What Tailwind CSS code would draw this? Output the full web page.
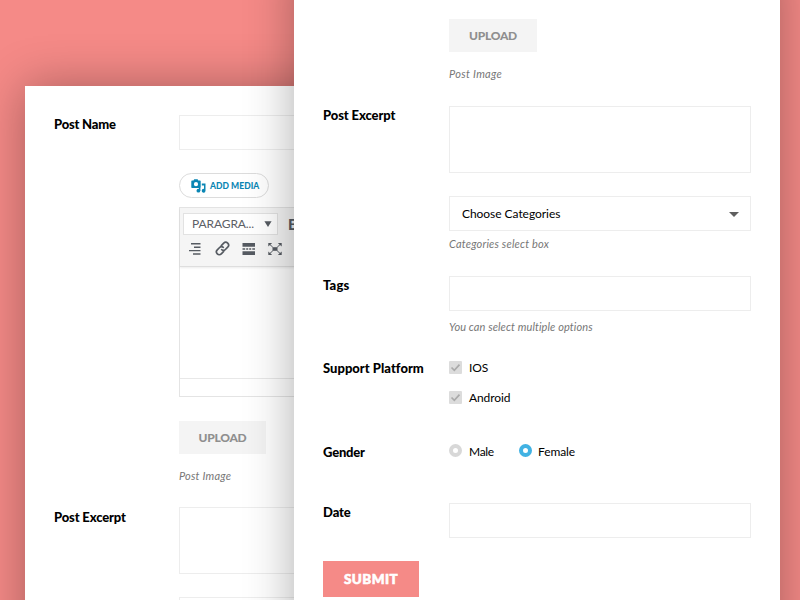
<!DOCTYPE html>
<html lang="en">
<head>
<meta charset="utf-8">
<title>Post form</title>
<script src="https://cdn.jsdelivr.net/npm/@tailwindcss/browser@4"></script>
</head>
<body class="bg-[#f58a87]">
<main class="relative w-[800px] h-[600px] overflow-clip bg-[#f58a87] font-[Lato,sans-serif] text-[12px] leading-[20px] text-black">

<!-- Back window -->
<section class="absolute left-[25px] top-[86px] w-[486px] h-[570px] bg-white pl-[29px] pr-[29px] pt-[29px] shadow-[0_0_46px_rgba(0,0,0,0.32)]">
  <div class="flex">
    <h2 class="w-[125px] shrink-0 -mt-px text-[13px] font-black tracking-[-0.2px]">Post Name</h2>
    <div class="w-[303px]">
      <div class="h-[35px] border border-[#ededed]"></div>
      <button class="mt-[23px] flex h-[25px] w-[90px] items-center rounded-full border border-[#dcdcdc] pl-[11px] text-[8.5px] font-black tracking-[0.05px] text-[#0a86b4]">
        <svg class="mr-[4px] shrink-0" width="15" height="14" viewBox="0 0 15 14" fill="#0a86b4"><path fill-rule="evenodd" d="M1 1.500h1.500L3.200.3h3.400l.7 1.200H9q.7 0 .7.7v6q0 .7-.7.7H1q-.7 0-.7-.7v-6q0-.7.7-.7zM5 3.100a2.100 2.100 0 1 0 0 4.200 2.100 2.100 0 0 0 0-4.200z"/><path d="M10.800 4.500h3.700v7.300a1.900 1.900 0 1 1-1.500-1.900V6.500h-2.200z"/><circle cx="7.400" cy="11.700" r="1.900"/><path d="M7.900 9h1.500v2.800H7.900z"/></svg>
        <span class="whitespace-nowrap">ADD MEDIA</span>
      </button>
      <div class="mt-[9px] h-[190px] border border-[#e4e4e4]">
        <div class="h-[59px] border-b border-[#dedede] bg-[#f5f5f5] pl-[3px] pt-[5px] shadow-[0_1px_2px_rgba(0,0,0,0.08)]">
          <div class="flex items-center">
            <div class="flex h-[22px] w-[95px] items-center justify-between border border-[#e2e2e2] bg-white pl-[8px] pr-[5px] text-[#5c6066]">
              <span class="tracking-[-0.1px]">PARAGRA...</span>
              <svg width="8" height="6" viewBox="0 0 8 6" fill="#565b62"><path d="M.4.3h7.200L4 6z"/></svg>
            </div>
            <b class="ml-[10px] text-[15px] font-black text-[#565b62]">B</b>
          </div>
          <div class="mt-[6px] flex items-center gap-[12px] pl-[6px]">
            <svg width="14" height="14" viewBox="0 0 14 14" stroke="#565b62" stroke-width="1.400"><path d="M2 1.800h9.500M5 5.200h6.500M0 8.600h11.500M4 12h7.500"/></svg>
            <svg width="15" height="15" viewBox="0 0 15 15" fill="none" stroke="#565b62" stroke-width="1.700" stroke-linecap="round"><path d="M6.300 4.600 8.700 2.200a2.800 2.800 0 0 1 4 4L10.400 8.500a2.800 2.800 0 0 1-3.700.2M8.700 10.400 6.300 12.800a2.800 2.800 0 0 1-4-4L4.600 6.500a2.800 2.800 0 0 1 3.700-.2"/></svg>
            <svg width="14" height="14" viewBox="0 0 14 14" fill="#565b62"><path d="M.5 1h12.500v3.800H.5zM.5 9.200h12.500V13H.5zM.5 6.300h2.700v1.400H.5zM4.200 6.300h2v1.400h-2zM7.200 6.300h2v1.400h-2zM10.300 6.300H13v1.400h-2.700z"/></svg>
            <svg width="14" height="14" viewBox="0 0 14 14" fill="#565b62"><path d="M4.500 5.200h5v3.600h-5z"/><path d="M.3 1h3.900L.3 4.400zM13.700 1H9.800l3.900 3.400zM.3 13h3.900L.3 9.600zM13.700 13H9.800l3.900-3.400z"/><path d="m1.300 2 3.500 3.200M12.700 2 9.200 5.200M1.300 12l3.500-3.200M12.700 12 9.200 8.800" stroke="#565b62"/></svg>
          </div>
        </div>
        <div class="h-[112px] border-b border-[#e8e8e8]"></div>
      </div>
      <div class="mt-[24px] flex h-[33px] w-[87px] items-center justify-center bg-[#f4f4f4] text-[12px] font-black tracking-[-0.25px] text-[#8f8f8f]">UPLOAD</div>
      <p class="mt-[12px] text-[11px] italic tracking-[0.2px] text-[#777]">Post Image</p>
    </div>
  </div>
  <div class="mt-[21px] flex">
    <h2 class="w-[125px] shrink-0 text-[13px] font-black tracking-[-0.15px]">Post Excerpt</h2>
    <div class="w-[303px]">
      <div class="h-[67px] border border-[#ededed]"></div>
      <div class="mt-[23px] h-[36px] border border-[#ededed]"></div>
    </div>
  </div>
</section>

<!-- Front window -->
<section class="absolute left-[294px] top-[-40px] w-[486px] h-[700px] bg-white pl-[29px] pr-[29px] pt-[59px] shadow-[0_0_46px_rgba(0,0,0,0.32)]">
  <div class="pl-[126px]">
    <div class="flex h-[33px] w-[88px] items-center justify-center bg-[#f4f4f4] text-[12px] font-black tracking-[-0.25px] text-[#8f8f8f]">UPLOAD</div>
    <p class="mt-[12px] text-[11px] italic tracking-[0.3px] text-[#777]">Post Image</p>
  </div>
  <div class="mt-[22px] flex">
    <h2 class="w-[126px] shrink-0 -mt-px text-[13px] font-black tracking-[-0.1px]">Post Excerpt</h2>
    <div class="w-[302px]">
      <div class="h-[67px] border border-[#ededed]"></div>
      <div class="mt-[23px] flex h-[35px] items-center justify-between border border-[#ededed] pl-[12px] pr-[11px]">
        <span class="tracking-[-0.05px]">Choose Categories</span>
        <svg class="mt-px" width="10" height="5" viewBox="0 0 10 5" fill="#5f5f5f"><path d="M0 0h10L5 5z"/></svg>
      </div>
      <p class="mt-[3px] text-[11px] italic tracking-[0.18px] text-[#777]">Categories select box</p>
    </div>
  </div>
  <div class="mt-[22px] flex">
    <h2 class="w-[126px] shrink-0 -mt-px text-[13px] font-black tracking-[0.15px]">Tags</h2>
    <div class="w-[302px]">
      <div class="h-[35px] border border-[#ededed]"></div>
      <p class="mt-[6px] text-[11px] italic tracking-[0.1px] text-[#777]">You can select multiple options</p>
    </div>
  </div>
  <div class="mt-[21px] flex">
    <h2 class="w-[126px] shrink-0 text-[13px] font-black tracking-[0.02px]">Support Platform</h2>
    <div class="flex flex-col gap-[10px]">
      <div class="flex items-center gap-[7px]">
        <svg class="-mt-px" width="13" height="13" viewBox="0 0 13 13"><rect width="13" height="13" rx="1" fill="#dcdcdc"/><path d="m2.500 6.500 2.800 2.800L10.500 3.600" fill="none" stroke="#aaa" stroke-width="1.700"/></svg>
        <span class="tracking-[-0.1px]">IOS</span>
      </div>
      <div class="flex items-center gap-[7px]">
        <svg class="-mt-px" width="13" height="13" viewBox="0 0 13 13"><rect width="13" height="13" rx="1" fill="#dcdcdc"/><path d="m2.500 6.500 2.800 2.800L10.500 3.600" fill="none" stroke="#aaa" stroke-width="1.700"/></svg>
        <span class="tracking-[-0.1px]">Android</span>
      </div>
    </div>
  </div>
  <div class="mt-[34px] flex">
    <h2 class="w-[126px] shrink-0 text-[13px] font-black tracking-[-0.2px]">Gender</h2>
    <div class="flex items-center">
      <i class="-mt-[3px] h-[13px] w-[13px] rounded-full border-4 border-[#d8d8d8]"></i>
      <span class="ml-[7px] w-[50px] tracking-[-0.3px]">Male</span>
      <i class="-mt-[3px] h-[13px] w-[13px] rounded-full border-4 border-[#41b2e3]"></i>
      <span class="ml-[6px] tracking-[-0.1px]">Female</span>
    </div>
  </div>
  <div class="mt-[41px] flex">
    <h2 class="w-[126px] shrink-0 -mt-px text-[13px] font-black tracking-[-0.1px]">Date</h2>
    <div class="h-[35px] w-[302px] border border-[#ededed]"></div>
  </div>
  <button class="mt-[23px] flex h-[36px] w-[96px] items-center justify-center bg-[#f58a87] text-[13.5px] font-black tracking-[0.4px] text-white [-webkit-text-stroke:0.6px_white]">SUBMIT</button>
</section>
</main>
</body>
</html>
